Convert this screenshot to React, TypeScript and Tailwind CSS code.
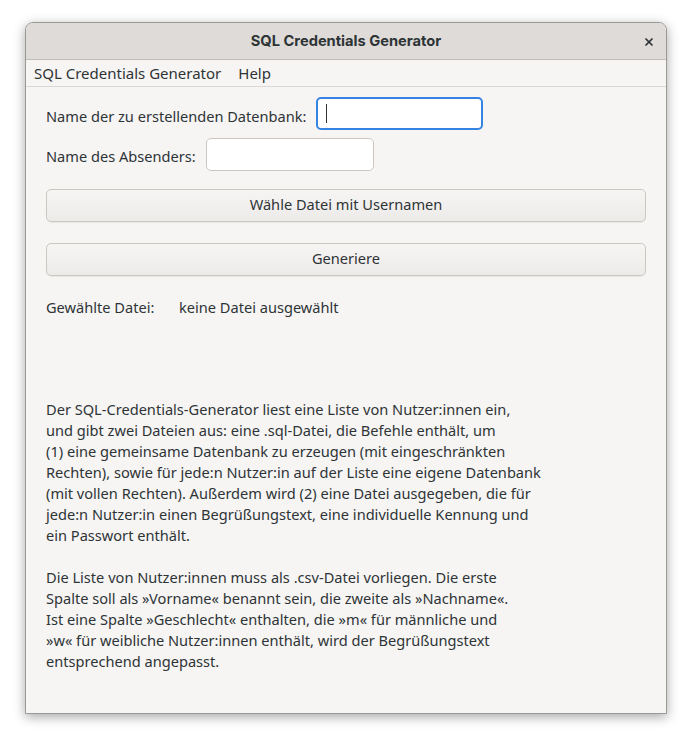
import { X } from 'lucide-react';

const font = { fontFamily: '"Noto Sans", sans-serif' };

function Entry({ width, focused }: { width: string; focused?: boolean }) {
  return (
    <div
      className={
        focused
          ? `${width} h-[33px] rounded-[5px] border-2 border-[#3584e4] bg-white flex items-center pl-[8px]`
          : `${width} h-[33px] rounded-[5px] border border-[#cdc7c2] bg-white`
      }
    >
      {focused && <div className="w-px h-[19px] bg-[#2e3436]" />}
    </div>
  );
}

function GtkButton({ label }: { label: string }) {
  return (
    <button className="w-full h-[33px] pb-[2px] rounded-[5px] border border-[#cdc7c2] bg-gradient-to-b from-[#f6f5f4] to-[#edebe9] text-[#2e3436] text-[14.6px] shadow-[0_1px_0_rgba(0,0,0,0.05)]">
      {label}
    </button>
  );
}

export default function App() {
  return (
    <div className="min-h-screen bg-white pt-[22px] pl-[25px]" style={font}>
      <div className="w-[642px] h-[692px] flex flex-col border border-[#9a9996] rounded-t-[8px] overflow-hidden bg-[#f6f5f4] shadow-[0_3px_12px_rgba(0,0,0,0.35)]">
        {/* Title bar */}
        <div className="h-[37px] shrink-0 bg-[#dedbd8] border-b border-[#c0bdb9] flex items-center relative">
          <div className="flex-1 text-center text-[14.67px] font-bold text-[#2e3436]" style={{ fontFamily: 'Inter, "Noto Sans", sans-serif' }}>
            SQL Credentials Generator
          </div>
          <X className="absolute right-[11px] top-[13px] w-[12px] h-[12px] text-[#2e3436]" strokeWidth={3.5} />
        </div>

        {/* Menu bar */}
        <div className="h-[27px] shrink-0 border-b border-[#dcd8d5] flex items-center gap-[17px] pl-[8px] text-[15px] text-[#2e3436]">
          <span>SQL Credentials Generator</span>
          <span>Help</span>
        </div>

        {/* Content */}
        <div className="flex-1 px-[20px] pt-[10px] text-[14.6px] text-[#2e3436]">
          <div className="flex items-center gap-[10px]">
            <span className="pt-[6px]">Name der zu erstellenden Datenbank:</span>
            <Entry width="w-[167px]" focused />
          </div>
          <div className="flex items-center gap-[10px] mt-[8px]">
            <span className="pt-[5px]">Name des Absenders:</span>
            <Entry width="w-[168px]" />
          </div>
          <div className="mt-[18px]">
            <GtkButton label="Wähle Datei mit Usernamen" />
          </div>
          <div className="mt-[21px]">
            <GtkButton label="Generiere" />
          </div>
          <div className="mt-[21px] flex leading-[21px]">
            <span className="w-[133px]">Gewählte Datei:</span>
            <span>keine Datei ausgewählt</span>
          </div>
          <div className="mt-[81px] leading-[21px]">
            <p>
              Der SQL-Credentials-Generator liest eine Liste von Nutzer:innen ein,
              <br />
              und gibt zwei Dateien aus: eine .sql-Datei, die Befehle enthält, um
              <br />
              (1) eine gemeinsame Datenbank zu erzeugen (mit eingeschränkten
              <br />
              Rechten), sowie für jede:n Nutzer:in auf der Liste eine eigene Datenbank
              <br />
              (mit vollen Rechten). Außerdem wird (2) eine Datei ausgegeben, die für
              <br />
              jede:n Nutzer:in einen Begrüßungstext, eine individuelle Kennung und
              <br />
              ein Passwort enthält.
            </p>
            <p className="mt-[21px]">
              Die Liste von Nutzer:innen muss als .csv-Datei vorliegen. Die erste
              <br />
              Spalte soll als »Vorname« benannt sein, die zweite als »Nachname«.
              <br />
              Ist eine Spalte »Geschlecht« enthalten, die »m« für männliche und
              <br />
              »w« für weibliche Nutzer:innen enthält, wird der Begrüßungstext
              <br />
              entsprechend angepasst.
            </p>
          </div>
        </div>
      </div>
    </div>
  );
}
